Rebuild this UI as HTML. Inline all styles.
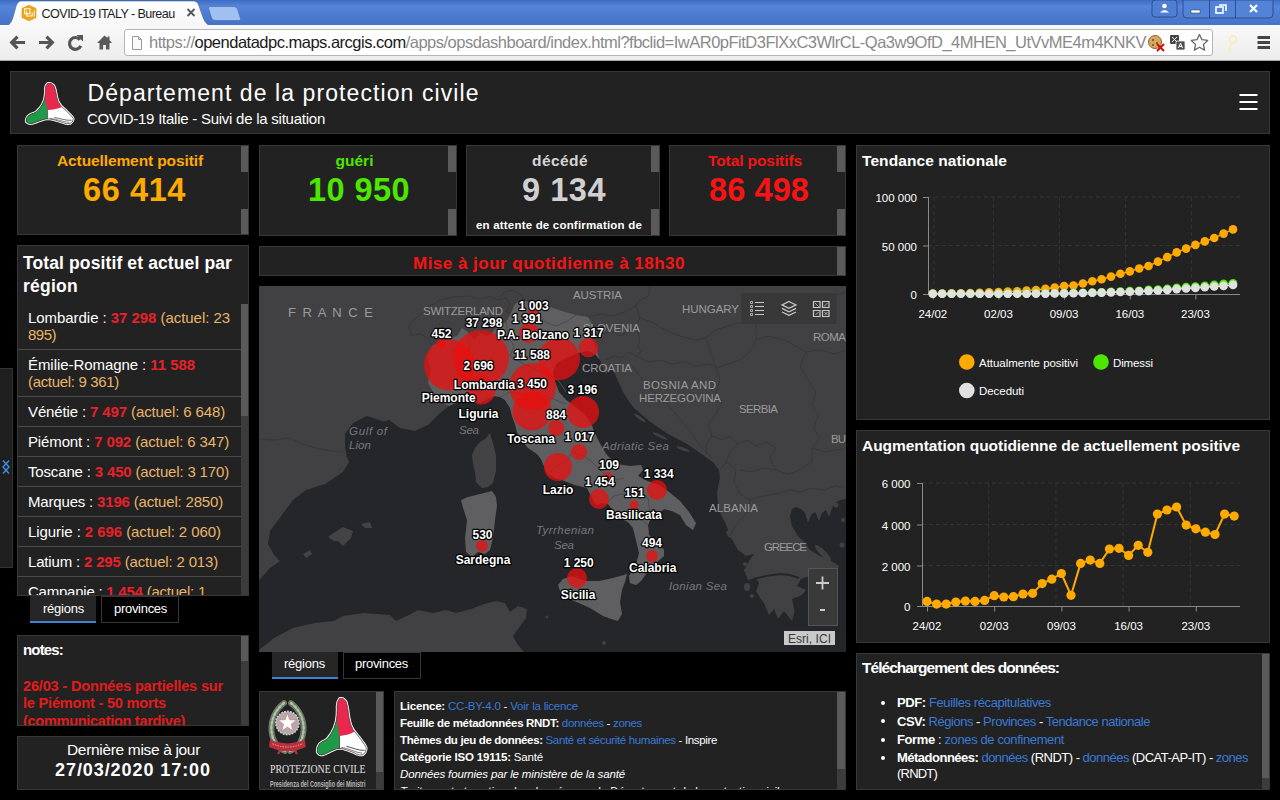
<!DOCTYPE html>
<html lang="fr">
<head>
<meta charset="utf-8">
<title>COVID-19 ITALY - Bureau</title>
<style>
*{box-sizing:border-box;margin:0;padding:0}
html,body{width:1280px;height:800px;overflow:hidden;background:#000}
body{position:relative;font-family:"Liberation Sans",sans-serif;color:#fff}
.abs{position:absolute}
.t{position:absolute;white-space:nowrap;line-height:1}
.panel{position:absolute;background:#222;border:1px solid #383838}
.sb{position:absolute;background:#5a5a5a}
.b{font-weight:bold}
a{color:#3b7ad6;text-decoration:none}
.li{height:30px;border-bottom:1px solid #4a4a4a;padding:6px 0 0 10px}
.ln{white-space:pre;display:block;width:max-content;height:17px}
.r{color:#e8212b}
.o{color:#e8b56a}
/*CHROME*/
#tabbar{left:0;top:0;width:1280px;height:25px;background:linear-gradient(#3d6cc4,#5584d8 25%,#4c7bd0 60%,#4573c8)}
#toolbar{left:0;top:25px;width:1280px;height:36px;background:linear-gradient(#f9f9f9,#ececec);border-bottom:1px solid #a8a8a8}
#urlbox{left:123.500px;top:29px;width:1089px;height:27px;background:#fff;border:1px solid #b5b5b5;border-radius:3px}
</style>
</head>
<body>
<div class="abs" id="tabbar"></div>
<svg class="abs" style="left:0;top:0" width="1280" height="26" viewBox="0 0 1280 26">
  <defs><linearGradient id="tg" x1="0" y1="0" x2="0" y2="1"><stop offset="0" stop-color="#ffffff"/><stop offset="1" stop-color="#f7f7f7"/></linearGradient></defs>
  <path d="M5 26 C11 25 12 21 15 10 C17 2.500 18 1 23 1 L192 1 C197 1 198 2.500 200 9 C204 20 205 25 212 26 Z" fill="url(#tg)" stroke="#4a5f8a" stroke-width="0.6"/>
  <path d="M209.500 6.500 L233 6.500 C236 6.500 237 7.500 238 10.500 L240.500 18.500 C240.500 19.500 240.500 20.500 238.500 20.500 L216 20.500 C213 20.500 212 19.500 211 16.500 L208.500 8.500 C208.500 7.500 208.500 6.500 209.500 6.500Z" fill="#9fc0f0" stroke="#4a6fb5" stroke-width="0.7"/>
  <!-- favicon -->
  <path d="M22 8.4 L29 5.2 L36 8.4 L36 17.6 L29 20.8 L22 17.6Z" fill="#eba516" stroke="#d9920f" stroke-width="0.6" stroke-linejoin="round"/>
  <path d="M24.6 8.8 h5.4 v4.8 h-5.4z M27 11.3 h-0.4 v4.7 h5.4" fill="none" stroke="#fff8e0" stroke-width="1.1"/><path d="M32.2 16.6 v-4 M34.3 16.6 v-6" stroke="#fff8e0" stroke-width="1.1"/>
  <!-- close x -->
  <path d="M187.5 9 l7 7 m0 -7 l-7 7" stroke="#555" stroke-width="1.8" fill="none"/>
  <!-- window controls -->
  <rect x="1152" y="0" width="25" height="17" rx="3" fill="#4f7fd2" stroke="#2d4f94" stroke-width="1"/>
  <circle cx="1164.5" cy="6" r="2.3" fill="#fff"/><path d="M1160 12.5 q4.5 -5 9 0z" fill="#fff"/>
  <path d="M1183 0 h90 v14 q0 4 -4 4 h-82 q-4 0 -4 -4z" fill="#5383d6" stroke="#2d4f94" stroke-width="1"/>
  <path d="M1209.5 0 v18 M1235.500 0 v18" stroke="#2d4f94" stroke-width="1"/>
  <rect x="1191" y="10" width="9" height="3" fill="#fff" stroke="#334" stroke-width="0.5"/>
  <rect x="1216" y="7" width="7" height="6" fill="none" stroke="#fff" stroke-width="1.6"/><path d="M1219 5 h7 v6" fill="none" stroke="#fff" stroke-width="1.6"/>
  <path d="M1250 5 l7 7 m0 -7 l-7 7" stroke="#fff" stroke-width="2.2" fill="none"/>
</svg>
<div class="t" style="left:41.6px;top:7.6px;font-size:12.6px;color:#1c1c1c;letter-spacing:-0.578px">COVID-19 ITALY - Bureau</div>
<div class="abs" id="toolbar"></div>
<div class="abs" id="urlbox"></div>
<svg class="abs" style="left:0;top:25px" width="1280" height="36" viewBox="0 25 1280 36">
  <g stroke="#555" stroke-width="3.2" fill="none" stroke-linecap="butt" stroke-linejoin="miter">
    <path d="M25 42.500 H12.500 M17.500 36.700 L11.700 42.500 L17.500 48.300"/>
    <path d="M39 42.500 H51.500 M46.500 36.700 L52.300 42.500 L46.500 48.300"/>
    <path d="M80 39.700 A5.900 5.900 0 1 0 80.800 45.800"/>
  </g>
  <path d="M76.500 35 L83 35 L83 41.500 Z" fill="#555"/>
  <path d="M104.500 35.500 L97 43 h2.500 v6.500 h3.600 v-4.500 h2.800 v4.500 h3.600 v-6.500 h2.500 L109.500 40 v-3.500 h-2 v1.500 Z" fill="#5a5a5a"/>
  <!-- page icon -->
  <path d="M132.500 36.500 h6 l3 3 v10 h-9z" fill="#fbfbfb" stroke="#9a9a9a" stroke-width="1"/>
  <path d="M138.500 36.500 v3 h3" fill="none" stroke="#9a9a9a" stroke-width="1"/>
  <!-- cookie -->
  <circle cx="1155" cy="42" r="6.500" fill="#d8a860" stroke="#8a6430" stroke-width="1"/>
  <circle cx="1153" cy="40" r="1" fill="#6a4420"/><circle cx="1157" cy="43" r="1" fill="#6a4420"/><circle cx="1153" cy="45" r="0.900" fill="#6a4420"/>
  <path d="M1157 44 l7 7 m0 -7 l-7 7" stroke="#cc1111" stroke-width="2"/>
  <!-- translate -->
  <rect x="1170" y="35" width="9" height="9" rx="1.2" fill="#444"/><rect x="1176" y="41" width="9" height="9" rx="1.2" fill="#505050" stroke="#f1f1f1" stroke-width="0.800"/>
  <path d="M1172 37 l5 5 m0 -5 l-5 5" stroke="#fff" stroke-width="1"/><path d="M1178.500 48 l2 -5 l2 5 m-3.300 -1.600 h2.600" stroke="#fff" stroke-width="1" fill="none"/>
  <!-- star -->
  <path d="M1199.5 34.5 l2.5 5.2 5.700 0.750 -4.200 3.950 1.100 5.700 -5.100 -2.800 -5.100 2.800 1.100 -5.700 -4.200 -3.950 5.700 -0.750z" fill="#fdfdfd" stroke="#666" stroke-width="1.3" stroke-linejoin="round"/>
  <!-- key -->
  <g stroke="#f6ecbc" fill="none" stroke-width="1.8"><circle cx="1233" cy="39.5" r="3.5"/><path d="M1231.5 43 l-2.500 8 m0.500 -3 l2.500 0.800"/></g>
  <!-- menu -->
  <path d="M1257.500 37.500 h12.500 M1257.500 42.500 h12.500 M1257.500 47.500 h12.500" stroke="#444" stroke-width="3"/>
</svg>
<div class="t" style="left:149px;top:34px;font-size:16.500px;color:#8a8a8a;letter-spacing:-0.502px">https://<span style="color:#1a1a1a">opendatadpc.maps.arcgis.com</span>/apps/opsdashboard/index.html?fbclid=IwAR0pFitD3FlXxC3WlrCL-Qa3w9OfD_4MHEN_UtVvME4m4KNKV</div>

<div class="panel" style="left:10px;top:71px;width:1260px;height:63px"></div>
<svg class="abs" style="left:25.500px;top:82.500px;overflow:visible" width="47" height="41" viewBox="0 0 100 100" preserveAspectRatio="none"><defs><clipPath id="lca"><path d="M49.3 0.7 C53.6 0.7 53.0 0.2 57.0 4.0 C61.0 7.8 59.0 5.2 61.3 12.2 C63.6 19.2 62.2 16.1 64.0 25.0 C65.8 33.9 64.4 30.6 66.7 38.9 C69.0 47.2 67.5 43.3 71.0 50.0 C74.5 56.7 72.3 52.9 77.3 58.9 C82.3 64.9 80.7 62.1 86.0 68.0 C91.3 73.9 89.0 71.4 93.3 76.7 C97.6 82.0 96.8 79.6 99.0 84.0 C101.2 88.4 101.0 85.8 100.0 90.0 C99.0 94.2 99.3 93.7 96.0 96.7 C92.7 99.7 94.3 98.6 90.0 99.0 C85.7 99.4 88.0 99.3 83.0 98.0 C78.0 96.7 80.4 96.9 75.0 95.0 C69.6 93.1 73.0 94.2 66.7 92.2 C60.4 90.2 63.1 90.5 56.0 89.0 C48.9 87.5 52.3 87.5 45.3 87.8 C38.3 88.1 42.1 87.8 35.0 90.0 C27.9 92.2 30.7 91.7 24.0 94.4 C17.3 97.1 20.3 96.5 15.0 98.0 C9.7 99.5 12.3 99.6 8.0 98.9 C3.7 98.2 4.5 98.6 2.0 96.0 C-0.5 93.4 0.3 95.2 0.5 91.0 C0.7 86.8 -0.1 88.0 2.7 83.3 C5.5 78.6 3.7 80.7 9.0 77.0 C14.3 73.3 13.0 76.2 18.7 72.2 C24.4 68.2 21.6 70.2 26.0 65.0 C30.4 59.8 28.3 63.0 32.0 56.7 C35.7 50.4 34.3 53.4 37.0 46.0 C39.7 38.6 38.7 42.4 40.0 34.4 C41.3 26.4 40.6 29.4 41.0 22.0 C41.4 14.6 40.3 18.2 41.3 12.2 C42.3 6.2 41.3 7.8 44.0 4.0 C46.7 0.2 45.0 0.7 49.3 0.7Z"/></clipPath></defs><path d="M49.3 0.7 C53.6 0.7 53.0 0.2 57.0 4.0 C61.0 7.8 59.0 5.2 61.3 12.2 C63.6 19.2 62.2 16.1 64.0 25.0 C65.8 33.9 64.4 30.6 66.7 38.9 C69.0 47.2 67.5 43.3 71.0 50.0 C74.5 56.7 72.3 52.9 77.3 58.9 C82.3 64.9 80.7 62.1 86.0 68.0 C91.3 73.9 89.0 71.4 93.3 76.7 C97.6 82.0 96.8 79.6 99.0 84.0 C101.2 88.4 101.0 85.8 100.0 90.0 C99.0 94.2 99.3 93.7 96.0 96.7 C92.7 99.7 94.3 98.6 90.0 99.0 C85.7 99.4 88.0 99.3 83.0 98.0 C78.0 96.7 80.4 96.9 75.0 95.0 C69.6 93.1 73.0 94.2 66.7 92.2 C60.4 90.2 63.1 90.5 56.0 89.0 C48.9 87.5 52.3 87.5 45.3 87.8 C38.3 88.1 42.1 87.8 35.0 90.0 C27.9 92.2 30.7 91.7 24.0 94.4 C17.3 97.1 20.3 96.5 15.0 98.0 C9.7 99.5 12.3 99.6 8.0 98.9 C3.7 98.2 4.5 98.6 2.0 96.0 C-0.5 93.4 0.3 95.2 0.5 91.0 C0.7 86.8 -0.1 88.0 2.7 83.3 C5.5 78.6 3.7 80.7 9.0 77.0 C14.3 73.3 13.0 76.2 18.7 72.2 C24.4 68.2 21.6 70.2 26.0 65.0 C30.4 59.8 28.3 63.0 32.0 56.7 C35.7 50.4 34.3 53.4 37.0 46.0 C39.7 38.6 38.7 42.4 40.0 34.4 C41.3 26.4 40.6 29.4 41.0 22.0 C41.4 14.6 40.3 18.2 41.3 12.2 C42.3 6.2 41.3 7.8 44.0 4.0 C46.7 0.2 45.0 0.7 49.3 0.7Z" fill="#fff" stroke="#fff" stroke-width="2.6" vector-effect="non-scaling-stroke" stroke-linejoin="round"/><g clip-path="url(#lca)"><rect x="-5" y="-5" width="110" height="110" fill="#e9284d"/><path d="M36 30 C42 42 43 55 46 66 L46 89 L20 112 L-12 112 L-12 55 Z" fill="#1f9a48"/><path d="M46 66 C56 66 66 64 78 58 L112 75 L112 112 L46 112 Z" fill="#fff"/><path d="M46 66 L46 89" stroke="#222" stroke-width="1.2"/><path d="M60 84 C72 86 84 92 97 91" stroke="#333" stroke-width="1.6" fill="none"/><path d="M50 86 C64 87 78 95 92 96" stroke="#333" stroke-width="1.2" fill="none"/></g><path d="M49.3 0.7 C53.6 0.7 53.0 0.2 57.0 4.0 C61.0 7.8 59.0 5.2 61.3 12.2 C63.6 19.2 62.2 16.1 64.0 25.0 C65.8 33.9 64.4 30.6 66.7 38.9 C69.0 47.2 67.5 43.3 71.0 50.0 C74.5 56.7 72.3 52.9 77.3 58.9 C82.3 64.9 80.7 62.1 86.0 68.0 C91.3 73.9 89.0 71.4 93.3 76.7 C97.6 82.0 96.8 79.6 99.0 84.0 C101.2 88.4 101.0 85.8 100.0 90.0 C99.0 94.2 99.3 93.7 96.0 96.7 C92.7 99.7 94.3 98.6 90.0 99.0 C85.7 99.4 88.0 99.3 83.0 98.0 C78.0 96.7 80.4 96.9 75.0 95.0 C69.6 93.1 73.0 94.2 66.7 92.2 C60.4 90.2 63.1 90.5 56.0 89.0 C48.9 87.5 52.3 87.5 45.3 87.8 C38.3 88.1 42.1 87.8 35.0 90.0 C27.9 92.2 30.7 91.7 24.0 94.4 C17.3 97.1 20.3 96.5 15.0 98.0 C9.7 99.5 12.3 99.6 8.0 98.9 C3.7 98.2 4.5 98.6 2.0 96.0 C-0.5 93.4 0.3 95.2 0.5 91.0 C0.7 86.8 -0.1 88.0 2.7 83.3 C5.5 78.6 3.7 80.7 9.0 77.0 C14.3 73.3 13.0 76.2 18.7 72.2 C24.4 68.2 21.6 70.2 26.0 65.0 C30.4 59.8 28.3 63.0 32.0 56.7 C35.7 50.4 34.3 53.4 37.0 46.0 C39.7 38.6 38.7 42.4 40.0 34.4 C41.3 26.4 40.6 29.4 41.0 22.0 C41.4 14.6 40.3 18.2 41.3 12.2 C42.3 6.2 41.3 7.8 44.0 4.0 C46.7 0.2 45.0 0.7 49.3 0.7Z" fill="none" stroke="#222" stroke-width="0.6" vector-effect="non-scaling-stroke"/></svg>
<div class="t" style="left:87.500px;font-size:23px;top:81.73px;letter-spacing:1.082px">Département de la protection civile</div>
<div class="t" style="left:87px;top:110.500px;font-size:15px;letter-spacing:-0.247px">COVID-19 Italie - Suivi de la situation</div>
<svg class="abs" style="left:1238px;top:92px" width="22" height="20"><path d="M1.500 3 h18 M1.500 10 h18 M1.500 17 h18" stroke="#fff" stroke-width="2"/></svg>

<!-- sidebar handle -->
<div class="abs" style="left:0;top:368px;width:13px;height:200px;background:#1f1f1f;border:1px solid #333;border-left:none"></div>
<svg class="abs" style="left:0px;top:459px" width="12" height="16"><path d="M3 1.500 l6 6.500 -6 6.500 M9 1.500 l-6 6.500 6 6.500" stroke="#3f8fe6" stroke-width="1.400" fill="none"/></svg>

<!-- L1 -->
<div class="panel" style="left:17px;top:145px;width:232px;height:90px"></div>
<div class="sb" style="left:241px;top:146px;width:7px;height:26px"></div>
<div class="sb" style="left:241px;top:209px;width:7px;height:25px"></div>
<div class="t b" style="left:57px;font-size:15.500px;top:152.88px;color:#ffaa00;letter-spacing:-0.107px">Actuellement positif</div>
<div class="t b" style="left:83px;font-size:32.500px;top:173.99px;color:#ffaa00;letter-spacing:0.599px">66 414</div>

<!-- L2 -->
<div class="panel" style="left:17px;top:245px;width:232px;height:351px;overflow:hidden">
  <div class="abs" style="left:0;top:57px;width:223px;height:300px;font-size:15px;line-height:17px;color:#fff">
    <div class="li" style="height:47px"><div class="ln" style="letter-spacing:-0.050px">Lombardie : <b class="r">37 298</b> <span class="o">(actuel: 23</span></div><div class="ln o" style="letter-spacing:-0.508px">895)</div></div>
    <div class="li" style="height:47px"><div class="ln" style="letter-spacing:-0.063px">Émilie-Romagne : <b class="r">11 588</b></div><div class="ln o" style="letter-spacing:-0.326px">(actuel: 9 361)</div></div>
    <div class="li"><div class="ln" style="letter-spacing:-0.129px">Vénétie : <b class="r">7 497</b> <span class="o">(actuel: 6 648)</span></div></div>
    <div class="li"><div class="ln" style="letter-spacing:-0.134px">Piémont : <b class="r">7 092</b> <span class="o">(actuel: 6 347)</span></div></div>
    <div class="li"><div class="ln" style="letter-spacing:-0.161px">Toscane : <b class="r">3 450</b> <span class="o">(actuel: 3 170)</span></div></div>
    <div class="li"><div class="ln" style="letter-spacing:-0.178px">Marques : <b class="r">3196</b> <span class="o">(actuel: 2850)</span></div></div>
    <div class="li"><div class="ln" style="letter-spacing:-0.070px">Ligurie : <b class="r">2 696</b> <span class="o">(actuel: 2 060)</span></div></div>
    <div class="li"><div class="ln" style="letter-spacing:-0.171px">Latium : <b class="r">2 295</b> <span class="o">(actuel: 2 013)</span></div></div>
    <div class="li"><div class="ln" style="letter-spacing:-0.233px">Campanie : <b class="r">1 454</b> <span class="o">(actuel: 1</span></div></div>
  </div>
  <div class="abs" style="left:223px;top:58px;width:8px;height:292px;background:#3c3c3c"></div>
  <div class="sb" style="left:223px;top:58px;width:8px;height:112px"></div>
</div>
<div class="t b" style="left:23px;font-size:17.500px;top:254.79px;letter-spacing:0.117px">Total positif et actuel par</div>
<div class="t b" style="left:23px;font-size:17.500px;top:277.79px;letter-spacing:0.253px">région</div>
<!-- tabs -->
<div class="abs" style="left:30px;top:596px;width:66px;height:27px;background:#262626;border-bottom:2px solid #3b82d8"></div>
<div class="abs" style="left:101px;top:596px;width:78px;height:27px;background:#020202;border:1px solid #363636"></div>
<div class="t" style="left:43px;font-size:13px;top:601.60px;letter-spacing:-0.234px">régions</div>
<div class="t" style="left:114px;font-size:13px;top:601.60px;letter-spacing:-0.293px">provinces</div>

<!-- L3 notes -->
<div class="panel" style="left:17px;top:635px;width:232px;height:91px;overflow:hidden">
  <div class="abs" style="left:223px;top:0;width:8px;height:92px;background:#3c3c3c"></div>
  <div class="sb" style="left:223px;top:0;width:8px;height:25px"></div>
</div>
<div class="t b" style="left:23px;font-size:15px;top:642.30px;letter-spacing:-0.833px">notes:</div>
<div class="abs" style="left:17px;top:675px;width:224px;height:50px;overflow:hidden">
<div class="t b" style="left:6px;top:3.500px;font-size:14.500px;color:#e21c1c;letter-spacing:-0.157px">26/03 - Données partielles sur</div>
<div class="t b" style="left:6px;top:21px;font-size:14.500px;color:#e21c1c;letter-spacing:-0.174px">le Piémont - 50 morts</div>
<div class="t b" style="left:6px;top:39.300px;font-size:14.500px;color:#e21c1c;letter-spacing:-0.278px">(communication tardive)</div>
</div>

<!-- L4 -->
<div class="panel" style="left:17px;top:736px;width:232px;height:54px"></div>
<div class="t" style="left:67px;font-size:15.500px;top:741.88px;letter-spacing:-0.328px">Dernière mise à jour</div>
<div class="t b" style="left:55px;font-size:18px;top:760.76px;letter-spacing:0.929px">27/03/2020 17:00</div>

<!-- M1 -->
<div class="panel" style="left:259px;top:145px;width:198px;height:91px"></div>
<div class="sb" style="left:448px;top:146px;width:8px;height:26px"></div>
<div class="sb" style="left:448px;top:209px;width:8px;height:26px"></div>
<div class="t b" style="left:335.500px;font-size:15.500px;top:152.88px;color:#4ce600;letter-spacing:0.019px">guéri</div>
<div class="t b" style="left:308px;font-size:32.500px;top:173.99px;color:#4ce600;letter-spacing:0.432px">10 950</div>
<!-- M2 -->
<div class="panel" style="left:466px;top:145px;width:194px;height:91px"></div>
<div class="sb" style="left:651px;top:146px;width:8px;height:26px"></div>
<div class="sb" style="left:651px;top:209px;width:8px;height:26px"></div>
<div class="t b" style="left:532px;font-size:15.500px;top:152.88px;color:#d6d6d6;letter-spacing:0.430px">décédé</div>
<div class="t b" style="left:522px;font-size:32.500px;top:173.99px;color:#d0d0d0;letter-spacing:0.531px">9 134</div>
<div class="t b" style="left:476px;font-size:11.500px;top:220.27px;color:#fff;letter-spacing:0.193px">en attente de confirmation de</div>
<!-- M3 -->
<div class="panel" style="left:669px;top:145px;width:177px;height:91px"></div>
<div class="sb" style="left:837px;top:146px;width:8px;height:26px"></div>
<div class="sb" style="left:837px;top:209px;width:8px;height:26px"></div>
<div class="t b" style="left:708px;font-size:15.500px;top:152.88px;color:#f81414;letter-spacing:-0.093px">Total positifs</div>
<div class="t b" style="left:709px;font-size:32.500px;top:173.99px;color:#f81414;letter-spacing:0.099px">86 498</div>
<!-- banner -->
<div class="panel" style="left:259px;top:246px;width:587px;height:30px"></div>
<div class="sb" style="left:837px;top:247px;width:8px;height:28px"></div>
<div class="t b" style="left:413px;font-size:17px;top:255.11px;color:#f81414;letter-spacing:0.485px">Mise à jour quotidienne à 18h30</div>
<!-- map tabs -->
<div class="abs" style="left:272px;top:652px;width:66px;height:27px;background:#262626;border-bottom:2px solid #3b82d8"></div>
<div class="abs" style="left:343px;top:652px;width:78px;height:27px;background:#020202;border:1px solid #363636"></div>
<div class="t" style="left:284px;font-size:13px;top:657.00px;letter-spacing:-0.234px">régions</div>
<div class="t" style="left:355px;font-size:13px;top:657.00px;letter-spacing:-0.293px">provinces</div>
<!-- logo panel -->
<div class="panel" style="left:259px;top:691px;width:125px;height:99px;overflow:hidden">
  <div class="abs" style="left:116px;top:0;width:8px;height:99px;background:#3c3c3c"></div>
  <div class="sb" style="left:116px;top:0;width:8px;height:80px"></div>
</div>
<svg class="abs" style="left:262px;top:693px" width="112" height="96" viewBox="262 693 112 96">
  <!-- emblem -->
  <g fill="none" stroke-linecap="round">
  <path d="M285 751 C268 744 266 717 284 703" stroke="#6b7a63" stroke-width="5.8"/>
  <path d="M290 751 C307 744 309 717 291 703" stroke="#6b7a63" stroke-width="5.8"/>
  <path d="M285 751 C268 744 266 717 284 703" stroke="#b4bfac" stroke-width="2.4" stroke-dasharray="2.2 2.4"/>
  <path d="M290 751 C307 744 309 717 291 703" stroke="#b4bfac" stroke-width="2.4" stroke-dasharray="2.2 2.4"/>
  </g>
  <circle cx="287.4" cy="723" r="11.6" fill="#b3aaac" stroke="#d2caca" stroke-width="1.6" stroke-dasharray="1.8 1.2"/>
  <path d="M287.4 713.2 l2.3 6.600 7 0.200 -5.500 4.300 2 6.700 -5.800 -3.900 -5.800 3.900 2 -6.700 -5.500 -4.300 7 -0.200z" fill="#ffffff" stroke="#d06a6a" stroke-width="0.6"/>
  <path d="M270 739.6 q17.400 7.600 34.800 0 l1 7.400 q-18.400 8.400 -36.800 0z" fill="#b7303c"/>
  <path d="M272.400 743.800 q15 6.400 30 0" stroke="#e08a90" stroke-width="1.1" fill="none" stroke-dasharray="1.6 1"/>
  <path d="M281 749 l-3 5 M294 749 l3 5" stroke="#b7303c" stroke-width="2.2"/>
  <text x="270" y="772.800" font-family="Liberation Serif, serif" font-size="12" fill="#e2e2e2" textLength="95.500" lengthAdjust="spacingAndGlyphs">PROTEZIONE CIVILE</text>
  <text x="270" y="787" font-family="Liberation Sans, sans-serif" font-weight="bold" font-size="9" fill="#b8b8b8" textLength="95.500" lengthAdjust="spacingAndGlyphs">Presidenza del Consiglio dei Ministri</text>
</svg>
<svg class="abs" style="left:317px;top:698px;overflow:visible" width="49" height="57.500" viewBox="0 0 100 100" preserveAspectRatio="none"><defs><clipPath id="lcb"><path d="M49.3 0.7 C53.6 0.7 53.0 0.2 57.0 4.0 C61.0 7.8 59.0 5.2 61.3 12.2 C63.6 19.2 62.2 16.1 64.0 25.0 C65.8 33.9 64.4 30.6 66.7 38.9 C69.0 47.2 67.5 43.3 71.0 50.0 C74.5 56.7 72.3 52.9 77.3 58.9 C82.3 64.9 80.7 62.1 86.0 68.0 C91.3 73.9 89.0 71.4 93.3 76.7 C97.6 82.0 96.8 79.6 99.0 84.0 C101.2 88.4 101.0 85.8 100.0 90.0 C99.0 94.2 99.3 93.7 96.0 96.7 C92.7 99.7 94.3 98.6 90.0 99.0 C85.7 99.4 88.0 99.3 83.0 98.0 C78.0 96.7 80.4 96.9 75.0 95.0 C69.6 93.1 73.0 94.2 66.7 92.2 C60.4 90.2 63.1 90.5 56.0 89.0 C48.9 87.5 52.3 87.5 45.3 87.8 C38.3 88.1 42.1 87.8 35.0 90.0 C27.9 92.2 30.7 91.7 24.0 94.4 C17.3 97.1 20.3 96.5 15.0 98.0 C9.7 99.5 12.3 99.6 8.0 98.9 C3.7 98.2 4.5 98.6 2.0 96.0 C-0.5 93.4 0.3 95.2 0.5 91.0 C0.7 86.8 -0.1 88.0 2.7 83.3 C5.5 78.6 3.7 80.7 9.0 77.0 C14.3 73.3 13.0 76.2 18.7 72.2 C24.4 68.2 21.6 70.2 26.0 65.0 C30.4 59.8 28.3 63.0 32.0 56.7 C35.7 50.4 34.3 53.4 37.0 46.0 C39.7 38.6 38.7 42.4 40.0 34.4 C41.3 26.4 40.6 29.4 41.0 22.0 C41.4 14.6 40.3 18.2 41.3 12.2 C42.3 6.2 41.3 7.8 44.0 4.0 C46.7 0.2 45.0 0.7 49.3 0.7Z"/></clipPath></defs><path d="M49.3 0.7 C53.6 0.7 53.0 0.2 57.0 4.0 C61.0 7.8 59.0 5.2 61.3 12.2 C63.6 19.2 62.2 16.1 64.0 25.0 C65.8 33.9 64.4 30.6 66.7 38.9 C69.0 47.2 67.5 43.3 71.0 50.0 C74.5 56.7 72.3 52.9 77.3 58.9 C82.3 64.9 80.7 62.1 86.0 68.0 C91.3 73.9 89.0 71.4 93.3 76.7 C97.6 82.0 96.8 79.6 99.0 84.0 C101.2 88.4 101.0 85.8 100.0 90.0 C99.0 94.2 99.3 93.7 96.0 96.7 C92.7 99.7 94.3 98.6 90.0 99.0 C85.7 99.4 88.0 99.3 83.0 98.0 C78.0 96.7 80.4 96.9 75.0 95.0 C69.6 93.1 73.0 94.2 66.7 92.2 C60.4 90.2 63.1 90.5 56.0 89.0 C48.9 87.5 52.3 87.5 45.3 87.8 C38.3 88.1 42.1 87.8 35.0 90.0 C27.9 92.2 30.7 91.7 24.0 94.4 C17.3 97.1 20.3 96.5 15.0 98.0 C9.7 99.5 12.3 99.6 8.0 98.9 C3.7 98.2 4.5 98.6 2.0 96.0 C-0.5 93.4 0.3 95.2 0.5 91.0 C0.7 86.8 -0.1 88.0 2.7 83.3 C5.5 78.6 3.7 80.7 9.0 77.0 C14.3 73.3 13.0 76.2 18.7 72.2 C24.4 68.2 21.6 70.2 26.0 65.0 C30.4 59.8 28.3 63.0 32.0 56.7 C35.7 50.4 34.3 53.4 37.0 46.0 C39.7 38.6 38.7 42.4 40.0 34.4 C41.3 26.4 40.6 29.4 41.0 22.0 C41.4 14.6 40.3 18.2 41.3 12.2 C42.3 6.2 41.3 7.8 44.0 4.0 C46.7 0.2 45.0 0.7 49.3 0.7Z" fill="#fff" stroke="#fff" stroke-width="2.6" vector-effect="non-scaling-stroke" stroke-linejoin="round"/><g clip-path="url(#lcb)"><rect x="-5" y="-5" width="110" height="110" fill="#e9284d"/><path d="M36 30 C42 42 43 55 46 66 L46 89 L20 112 L-12 112 L-12 55 Z" fill="#1f9a48"/><path d="M46 66 C56 66 66 64 78 58 L112 75 L112 112 L46 112 Z" fill="#fff"/><path d="M46 66 L46 89" stroke="#222" stroke-width="1.2"/><path d="M60 84 C72 86 84 92 97 91" stroke="#333" stroke-width="1.6" fill="none"/><path d="M50 86 C64 87 78 95 92 96" stroke="#333" stroke-width="1.2" fill="none"/></g><path d="M49.3 0.7 C53.6 0.7 53.0 0.2 57.0 4.0 C61.0 7.8 59.0 5.2 61.3 12.2 C63.6 19.2 62.2 16.1 64.0 25.0 C65.8 33.9 64.4 30.6 66.7 38.9 C69.0 47.2 67.5 43.3 71.0 50.0 C74.5 56.7 72.3 52.9 77.3 58.9 C82.3 64.9 80.7 62.1 86.0 68.0 C91.3 73.9 89.0 71.4 93.3 76.7 C97.6 82.0 96.8 79.6 99.0 84.0 C101.2 88.4 101.0 85.8 100.0 90.0 C99.0 94.2 99.3 93.7 96.0 96.7 C92.7 99.7 94.3 98.6 90.0 99.0 C85.7 99.4 88.0 99.3 83.0 98.0 C78.0 96.7 80.4 96.9 75.0 95.0 C69.6 93.1 73.0 94.2 66.7 92.2 C60.4 90.2 63.1 90.5 56.0 89.0 C48.9 87.5 52.3 87.5 45.3 87.8 C38.3 88.1 42.1 87.8 35.0 90.0 C27.9 92.2 30.7 91.7 24.0 94.4 C17.3 97.1 20.3 96.5 15.0 98.0 C9.7 99.5 12.3 99.6 8.0 98.9 C3.7 98.2 4.5 98.6 2.0 96.0 C-0.5 93.4 0.3 95.2 0.5 91.0 C0.7 86.8 -0.1 88.0 2.7 83.3 C5.5 78.6 3.7 80.7 9.0 77.0 C14.3 73.3 13.0 76.2 18.7 72.2 C24.4 68.2 21.6 70.2 26.0 65.0 C30.4 59.8 28.3 63.0 32.0 56.7 C35.7 50.4 34.3 53.4 37.0 46.0 C39.7 38.6 38.7 42.4 40.0 34.4 C41.3 26.4 40.6 29.4 41.0 22.0 C41.4 14.6 40.3 18.2 41.3 12.2 C42.3 6.2 41.3 7.8 44.0 4.0 C46.7 0.2 45.0 0.7 49.3 0.7Z" fill="none" stroke="#222" stroke-width="0.6" vector-effect="non-scaling-stroke"/></svg>
<!-- licence panel -->
<div class="panel" style="left:394px;top:691px;width:452px;height:99px;overflow:hidden">
  <div class="abs" style="left:442px;top:0;width:8px;height:99px;background:#3c3c3c"></div>
  <div class="sb" style="left:442px;top:0;width:8px;height:77px"></div>
</div>
<div class="abs" style="left:394px;top:692px;width:442px;height:97px;overflow:hidden;font-size:11.500px">
<div class="t" style="left:6px;font-size:11.500px;top:9.47px;letter-spacing:-0.212px"><b>Licence:</b> <a>CC-BY-4.0</a> - <a>Voir la licence</a></div>
<div class="t" style="left:6px;font-size:11.500px;top:26.07px;letter-spacing:-0.325px"><b>Feuille de métadonnées RNDT:</b> <a>données</a> - <a>zones</a></div>
<div class="t" style="left:6px;font-size:11.500px;top:42.77px;letter-spacing:-0.351px"><b>Thèmes du jeu de données:</b> <a>Santé et sécurité humaines</a> - Inspire</div>
<div class="t" style="left:6px;font-size:11.500px;top:59.77px;letter-spacing:-0.180px"><b>Catégorie ISO 19115:</b> Santé</div>
<div class="t" style="left:6px;font-size:11.500px;font-style:italic;top:76.77px;letter-spacing:-0.143px">Données fournies par le ministère de la santé</div>
<div class="t" style="left:6px;font-size:11.500px;font-style:italic;top:94.27px;letter-spacing:-0.045px">Traitement et gestion des données par le Département de la protection civile</div>
</div>

<svg class="abs" style="left:259px;top:286px" width="587" height="366" viewBox="259 286 587 366" font-family="Liberation Sans, sans-serif">
<rect x="259" y="286" width="587" height="366" fill="#25262a"/>
<path d="M259 286 L259 581 L261 578 L270 568 L280 561 L274 555 L268 544 L270 531 L282 515 L293 500 L306 490 L325 484 L343 472 L349 462 L346.5 456 L345 445 L345 434 L353 423 L367 416 L376 419 L384 421.5 L389 420 L400 428 L415 431 L428 425 L439 414 L449 406 L458 402 L466 400 L474 401 L480 403 L488 399 L494 396 L500 397 L505 400 L510 408 L512 416 L515 424 L517 432 L522 441 L528 448 L537 454 L541 459 L543 464 L548 474 L555 478 L562 480 L575 485 L587 488 L590 494 L593 500 L596 505 L602 503 L608 504 L612 509 L620 518 L628 522 L633 528 L636 540 L639 553 L636 565 L629 576 L630 583 L636 585 L641 581 L646 574 L655 564 L664 556 L664 550 L658 543 L649 535 L648 525 L651 518 L658 514 L664 509 L672 511 L680 515 L686 525 L693 530 L696 523 L689 512 L680 501 L669 492 L659 485 L647 481 L638 476 L643 470 L641 465 L630 466 L616 464 L606 454 L598 440 L592 426 L586 416 L576 407 L566 400 L559 392 L555 382 L553 372 L556 364 L566 358 L578 353 L588 351 L595 354 L599 359 L601 362 L603 369 L606 374 L609 369 L611 365 L614 372 L618 381 L623 392 L628 400 L634 408 L649 421 L668 434 L687 444 L703 455 L714 463 L719 470 L720 478 L717 492 L718 507 L722 517 L726 524 L730 536 L738 550 L746 556 L754 554 L749 561 L744 570 L748 580 L756 578 L759 583 L756 591 L760 598 L764 603 L769 615 L774 609 L778 619 L784 611 L792 621 L794.5 611 L792 599 L802 595 L806 590 L797 586 L801 579 L812 575 L822 578 L830 588 L838 590 L838 568 L839 566 L833 562 L820 556 L810 550 L806 544 L798 536 L792 526 L790 516 L792 509 L796 507 L801 509 L805 513 L808 523 L811 515 L815 512 L819 521 L822 513 L826 510 L829 517 L832 508 L835 503 L840 500 L846 499 L846 286Z" fill="#414143"/>
<path d="M259 653 L259 650 L274 638 L293 628 L315 623 L334 621 L343 616 L364 613 L390 615 L396 621 L409 615 L418 610 L433 613 L446 610 L456 613 L471 609 L484 604 L496 601 L505 603 L510 612 L518 606 L527 609 L526 618 L518 629 L513 636 L518 645 L525 653Z" fill="#414143"/>
<path d="M490 433 L486 438 L479 443 L475 448 L472 455 L473 464 L475 472 L476 482 L482 488 L488 487 L493 483 L496 471 L496 455 L493 443 L491 437Z" fill="#434345"/>
<path d="M328 537 L335 532 L343 527 L353 531 L351 538 L343 546 L338 541 L334 541Z" fill="#434345"/>
<path d="M361 524 L370 522 L372 528 L365 528Z" fill="#434345"/>
<path d="M303 554 L310 550 L312 554 L306 558Z" fill="#434345"/>
<g fill="#414143"><ellipse cx="729" cy="534" rx="2" ry="4" transform="rotate(-30 729 534)"/><circle cx="745" cy="564" r="2"/><ellipse cx="747" cy="587" rx="3" ry="4"/><circle cx="752" cy="596" r="2"/><circle cx="547" cy="617" r="1.500"/><circle cx="604" cy="643" r="2"/><circle cx="836" cy="505" r="2.500"/><ellipse cx="622" cy="385" rx="1.500" ry="5" transform="rotate(-30 622 385)"/><ellipse cx="640" cy="418" rx="1.500" ry="7" transform="rotate(-55 640 418)"/><ellipse cx="660" cy="436" rx="1.500" ry="8" transform="rotate(-65 660 436)"/><ellipse cx="683" cy="449" rx="1.500" ry="7" transform="rotate(-70 683 449)"/><ellipse cx="823" cy="553" rx="3" ry="11" transform="rotate(-45 823 553)"/><circle cx="842" cy="545" r="2.500"/><circle cx="843" cy="520" r="2"/></g>
<path d="M753 579 L766 576 L780 574 L790 575 L799 578" stroke="#25262a" stroke-width="2" fill="none"/>
<path d="M449 406 L458 402 L466 400 L474 401 L480 403 L488 399 L494 396 L500 397 L505 400 L510 408 L512 416 L515 424 L517 432 L522 441 L528 448 L537 454 L541 459 L543 464 L548 474 L555 478 L562 480 L575 485 L587 488 L590 494 L593 500 L596 505 L602 503 L608 504 L612 509 L620 518 L628 522 L633 528 L636 540 L639 553 L636 565 L629 576 L630 583 L636 585 L641 581 L646 574 L655 564 L664 556 L664 550 L658 543 L649 535 L648 525 L651 518 L658 514 L664 509 L672 511 L680 515 L686 525 L693 530 L696 523 L689 512 L680 501 L669 492 L659 485 L647 481 L638 476 L643 470 L641 465 L630 466 L616 464 L606 454 L598 440 L592 426 L586 416 L576 407 L566 400 L559 392 L555 382 L553 372 L556 364 L566 358 L578 353 L588 351 L595 354 L599 359 L597 350 L592 340 L588 332 L592 324 L588 317 L576 315 L562 311 L550 307 L541 300 L531 302 L522 300 L515 304 L511 313 L506 322 L500 325 L494 330 L488 337 L481 333 L474 340 L468 332 L462 328 L457 336 L450 338 L441 342 L432 346 L427 357 L431 369 L428 383 L434 394 L441 402Z" fill="#5f5f61"/>
<path d="M461 500 L468 497 L480 494 L492 491 L496 497 L497 506 L495 520 L493 538 L490 550 L485 554 L478 552 L472 557 L466 552 L465 538 L467 520 L463 508Z" fill="#5f5f61"/>
<path d="M558 585 L563 579 L572 576 L580 579 L586 581 L599 581 L613 578 L627 574 L625 582 L622 590 L620 602 L622 614 L618 621 L611 619 L603 616 L590 608 L574 601 L561 594Z" fill="#5f5f61"/>
<path d="M259 439 L275 440 L290 438 L300 443 L312 447 L330 451 L345 452" stroke="#38383a" stroke-width="1" fill="none"/>
<path d="M432 346 L428 338 L420 334 L412 336 L408 326 L416 318 L424 312 L432 305 L440 300 L452 297 L468 296 L480 299 L490 296 L498 300 L506 298 L510 304 L506 312 L511 313" stroke="#38383a" stroke-width="1" fill="none"/>
<path d="M498 300 L504 292 L512 290 L520 294 L524 300" stroke="#38383a" stroke-width="1" fill="none"/>
<path d="M588 317 L600 314 L612 316 L625 312 L636 306 L640 300 L648 296 L650 286" stroke="#38383a" stroke-width="1" fill="none"/>
<path d="M588 332 L596 330 L604 334 L612 331 L620 336 L628 332 L636 325 L640 318 L636 306" stroke="#38383a" stroke-width="1" fill="none"/>
<path d="M640 318 L652 322 L665 330 L680 336 L696 340 L706 338 L715 330 L728 326 L742 322 L756 318 L770 312 L785 310 L800 312 L812 306 L822 300 L834 296 L846 292" stroke="#38383a" stroke-width="1" fill="none"/>
<path d="M606 360 L614 356 L622 358 L628 352 L636 356 L641 352 L638 346 L640 340 L636 325" stroke="#38383a" stroke-width="1" fill="none"/>
<path d="M636 356 L648 362 L660 360 L672 364 L684 362 L696 366 L708 364 L716 368 L712 356 L706 338" stroke="#38383a" stroke-width="1" fill="none"/>
<path d="M632 366 L640 376 L650 388 L662 400 L674 412 L684 424 L694 436 L700 446 L706 452" stroke="#38383a" stroke-width="1" fill="none"/>
<path d="M716 368 L720 380 L716 392 L722 402 L716 414 L708 424 L712 436 L706 446 L706 452 L712 458" stroke="#38383a" stroke-width="1" fill="none"/>
<path d="M716 368 L728 364 L740 360 L750 352 L756 340 L770 336 L784 340 L796 346 L806 352" stroke="#38383a" stroke-width="1" fill="none"/>
<path d="M756 340 L756 318" stroke="#38383a" stroke-width="1" fill="none"/>
<path d="M806 352 L800 366 L808 380 L816 392 L812 404 L818 416 L814 428 L820 438 L812 448" stroke="#38383a" stroke-width="1" fill="none"/>
<path d="M712 436 L722 440 L730 436 L738 444 L730 452 L726 462 L720 470" stroke="#38383a" stroke-width="1" fill="none"/>
<path d="M738 444 L748 440 L756 446 L766 442 L776 448 L770 458 L776 470 L788 474 L800 470 L812 462 L812 448 L826 452 L846 448" stroke="#38383a" stroke-width="1" fill="none"/>
<path d="M726 462 L736 470 L734 482 L740 494 L750 500 L748 512 L740 520 L734 528 L730 536" stroke="#38383a" stroke-width="1" fill="none"/>
<path d="M750 500 L762 496 L776 494 L790 490 L800 492 L812 488 L824 490 L836 486 L846 488" stroke="#38383a" stroke-width="1" fill="none"/>
<path d="M740 470 L752 472 L764 468 L776 470" stroke="#38383a" stroke-width="1" fill="none"/>
<path d="M806 352 L820 350 L834 354 L846 350" stroke="#38383a" stroke-width="1" fill="none"/>
<path d="M524 300 L531 302" stroke="#38383a" stroke-width="1" fill="none"/>
<path d="M468 332 L470 345 L466 356 L472 368 L468 380 L476 388" stroke="#4c4c4e" stroke-width="1" fill="none"/>
<path d="M506 322 L508 336 L514 346 L510 356" stroke="#4c4c4e" stroke-width="1" fill="none"/>
<path d="M541 300 L538 312 L545 322 L556 326 L566 322 L576 315" stroke="#4c4c4e" stroke-width="1" fill="none"/>
<path d="M510 356 L520 362 L532 368 L546 374 L558 380 L567 393" stroke="#4c4c4e" stroke-width="1" fill="none"/>
<path d="M500 397 L510 392 L522 394 L534 398 L546 396 L556 400 L566 404" stroke="#4c4c4e" stroke-width="1" fill="none"/>
<path d="M548 474 L556 466 L566 462 L572 452 L584 456 L592 462 L600 470 L606 476 L616 480 L624 478" stroke="#4c4c4e" stroke-width="1" fill="none"/>
<path d="M606 504 L614 496 L622 494 L630 498 L640 494 L648 498 L651 518" stroke="#4c4c4e" stroke-width="1" fill="none"/>
<path d="M620 518 L630 514 L640 518 L648 525" stroke="#4c4c4e" stroke-width="1" fill="none"/>
<text x="288" y="317" font-size="13" fill="#9b9b9b" textLength="85" lengthAdjust="spacing">F R A N C E</text>
<text x="423" y="315" font-size="11.5" fill="#9b9b9b" textLength="80" lengthAdjust="spacing">SWITZERLAND</text>
<text x="573" y="299" font-size="11.5" fill="#9b9b9b" textLength="49" lengthAdjust="spacing">AUSTRIA</text>
<text x="682" y="313" font-size="11.5" fill="#9b9b9b" textLength="57" lengthAdjust="spacing">HUNGARY</text>
<text x="583" y="332" font-size="11.5" fill="#9b9b9b" textLength="57" lengthAdjust="spacing">SLOVENIA</text>
<text x="582" y="372" font-size="11.5" fill="#9b9b9b" textLength="50" lengthAdjust="spacing">CROATIA</text>
<text x="643" y="389" font-size="11.5" fill="#9b9b9b" textLength="73" lengthAdjust="spacing">BOSNIA AND</text>
<text x="639" y="402" font-size="11.5" fill="#9b9b9b" textLength="82" lengthAdjust="spacing">HERZEGOVINA</text>
<text x="739" y="413" font-size="11.5" fill="#9b9b9b" textLength="39" lengthAdjust="spacing">SERBIA</text>
<text x="813" y="341" font-size="11.5" fill="#9b9b9b" textLength="33" lengthAdjust="spacing">ROMA</text>
<text x="831" y="443" font-size="11.5" fill="#9b9b9b" textLength="15" lengthAdjust="spacing">BU</text>
<text x="709" y="512" font-size="11.5" fill="#9b9b9b" textLength="49" lengthAdjust="spacing">ALBANIA</text>
<text x="764" y="551" font-size="11.5" fill="#9b9b9b" textLength="43" lengthAdjust="spacing">GREECE</text>
<text x="349" y="435" font-size="11.5" fill="#77787c" textLength="38" lengthAdjust="spacing" font-style="italic">Gulf of</text>
<text x="349" y="449" font-size="11.5" fill="#77787c" textLength="22" lengthAdjust="spacing" font-style="italic">Lion</text>
<text x="459" y="433.5" font-size="11.5" fill="#77787c" textLength="20" lengthAdjust="spacing" font-style="italic">Sea</text>
<text x="602" y="450" font-size="11.5" fill="#77787c" textLength="67" lengthAdjust="spacing" font-style="italic">Adriatic Sea</text>
<text x="536" y="534" font-size="11.5" fill="#77787c" textLength="58" lengthAdjust="spacing" font-style="italic">Tyrrhenian</text>
<text x="554" y="549" font-size="11.5" fill="#77787c" textLength="20" lengthAdjust="spacing" font-style="italic">Sea</text>
<text x="669" y="590" font-size="11.5" fill="#77787c" textLength="58" lengthAdjust="spacing" font-style="italic">Ionian Sea</text>
<circle cx="449.5" cy="365" r="25.5" fill="#e81010" fill-opacity="0.76"/>
<circle cx="481" cy="358" r="28" fill="#e81010" fill-opacity="0.76"/>
<circle cx="481" cy="390" r="14.5" fill="#e81010" fill-opacity="0.76"/>
<circle cx="529" cy="333" r="10" fill="#e81010" fill-opacity="0.76"/>
<circle cx="533" cy="314" r="6" fill="#e81010" fill-opacity="0.76"/>
<circle cx="441.5" cy="344" r="5" fill="#e81010" fill-opacity="0.76"/>
<circle cx="559" cy="359" r="21" fill="#e81010" fill-opacity="0.76"/>
<circle cx="588.5" cy="347.6" r="9.7" fill="#e81010" fill-opacity="0.76"/>
<circle cx="532.5" cy="386.5" r="23.5" fill="#e81010" fill-opacity="0.76"/>
<circle cx="532" cy="411" r="19.5" fill="#e81010" fill-opacity="0.76"/>
<circle cx="583" cy="412" r="16" fill="#e81010" fill-opacity="0.76"/>
<circle cx="556" cy="428" r="8" fill="#e81010" fill-opacity="0.76"/>
<circle cx="579" cy="452" r="8" fill="#e81010" fill-opacity="0.76"/>
<circle cx="558" cy="467" r="14" fill="#e81010" fill-opacity="0.76"/>
<circle cx="608" cy="476" r="4" fill="#e81010" fill-opacity="0.76"/>
<circle cx="599" cy="499" r="10" fill="#e81010" fill-opacity="0.76"/>
<circle cx="634" cy="505" r="4.5" fill="#e81010" fill-opacity="0.76"/>
<circle cx="657" cy="490" r="10" fill="#e81010" fill-opacity="0.76"/>
<circle cx="652" cy="556" r="6" fill="#e81010" fill-opacity="0.76"/>
<circle cx="577" cy="578" r="10" fill="#e81010" fill-opacity="0.76"/>
<circle cx="482" cy="546" r="6" fill="#e81010" fill-opacity="0.76"/>
<g font-weight="bold" font-size="12" fill="#fff" stroke="#000" stroke-width="2.400" stroke-linejoin="round" paint-order="stroke" text-anchor="middle">
<text x="533.7" y="309.9">1 003</text>
<text x="527" y="322.9">1 391</text>
<text x="484" y="326.9">37 298</text>
<text x="441.5" y="337.9">452</text>
<text x="533" y="339.4">P.A. Bolzano</text>
<text x="588.6" y="336.9">1 317</text>
<text x="532" y="358.6">11 588</text>
<text x="478.5" y="370.4">2 696</text>
<text x="484.5" y="388.6">Lombardia</text>
<text x="532" y="387.9">3 450</text>
<text x="448.7" y="401.6">Piemonte</text>
<text x="582.5" y="393.6">3 196</text>
<text x="478.5" y="417.9">Liguria</text>
<text x="556" y="419.4">884</text>
<text x="531" y="442.9">Toscana</text>
<text x="579.4" y="440.9">1 017</text>
<text x="609" y="469.4">109</text>
<text x="658.7" y="477.9">1 334</text>
<text x="558" y="494.4">Lazio</text>
<text x="599.7" y="485.9">1 454</text>
<text x="634.4" y="497.4">151</text>
<text x="634" y="519.4">Basilicata</text>
<text x="482.5" y="538.6">530</text>
<text x="483" y="563.6">Sardegna</text>
<text x="652" y="547.4">494</text>
<text x="578.7" y="567.4">1 250</text>
<text x="652.7" y="572.4">Calabria</text>
<text x="578" y="598.6">Sicilia</text>
</g>
<rect x="741.500" y="293" width="95" height="31" fill="#383838" fill-opacity="0.950"/>
<g stroke="#c8c8c8" fill="none" stroke-width="1.200"><path d="M755 302.500 h9 M755 306.500 h9 M755 310.500 h9 M755 314.500 h9"/><path d="M750.500 301.500 h2 v2 h-2z M750.500 305.500 h2 v2 h-2z M750.500 309.500 h2 v2 h-2z M750.500 313.500 h2 v2 h-2z" stroke-width="0.800"/>
<path d="M789 301.500 l7 3.400 -7 3.400 -7 -3.400z M782 308.400 l7 3.400 7 -3.400 M782 312 l7 3.400 7 -3.400"/>
<path d="M813.500 301.500 h6.500 v6 h-6.500z M822.500 301.500 h6.500 v6 h-6.500z M813.500 310.500 h6.500 v6 h-6.500z M822.500 310.500 h6.500 v6 h-6.500z"/><path d="M815 303 l3.500 3.500 M827.500 303 l-3.500 3.500 M815.500 315 l3 -3 M824.500 312 l3 3 m0 -3 l-3 3" stroke-width="0.800"/></g>
<rect x="808.500" y="568.500" width="29" height="57" fill="#3a3a3a" stroke="#555" stroke-width="1"/>
<path d="M816 583 h13 M822.500 576.500 v13 M820 610 h5" stroke="#ccc" stroke-width="1.800"/>
<rect x="784" y="631" width="51" height="14" fill="#c9c9c9"/>
<text x="788" y="642.500" font-size="12" fill="#3a3a3a" textLength="43" lengthAdjust="spacing">Esri, ICI</text>
</svg>
<div class="panel" style="left:856px;top:145px;width:414px;height:275px"></div>
<div class="t b" style="left:862px;font-size:15.500px;top:152.88px;letter-spacing:0.080px">Tendance nationale</div>
<svg class="abs" style="left:856px;top:145px" width="414" height="275" viewBox="856 145 414 275" font-family="Liberation Sans, sans-serif">
<path d="M928 197 H1240" stroke="#343434" stroke-width="1" stroke-dasharray="4 3"/>
<path d="M928 245.5 H1240" stroke="#343434" stroke-width="1" stroke-dasharray="4 3"/>
<path d="M934.0 197 V294" stroke="#343434" stroke-width="1" stroke-dasharray="4 3"/>
<path d="M993.4 197 V294" stroke="#343434" stroke-width="1" stroke-dasharray="4 3"/>
<path d="M1059.4 197 V294" stroke="#343434" stroke-width="1" stroke-dasharray="4 3"/>
<path d="M1125.4 197 V294" stroke="#343434" stroke-width="1" stroke-dasharray="4 3"/>
<path d="M1191.4 197 V294" stroke="#343434" stroke-width="1" stroke-dasharray="4 3"/>
<path d="M928.500 197 V294.500 H1240" stroke="#8a8a8a" stroke-width="1" fill="none"/>
<path d="M923 197.5 h6" stroke="#8a8a8a"/>
<path d="M923 246.0 h6" stroke="#8a8a8a"/>
<path d="M923 294.5 h6" stroke="#8a8a8a"/>
<path d="M933.3 294.500 v5" stroke="#8a8a8a"/>
<path d="M999.0 294.500 v5" stroke="#8a8a8a"/>
<path d="M1064.6 294.500 v5" stroke="#8a8a8a"/>
<path d="M1130.3 294.500 v5" stroke="#8a8a8a"/>
<path d="M1195.9 294.500 v5" stroke="#8a8a8a"/>
<text x="917" y="202.0" text-anchor="end" font-size="11.500" fill="#fff">100 000</text>
<text x="917" y="250.5" text-anchor="end" font-size="11.500" fill="#fff">50 000</text>
<text x="917" y="299.0" text-anchor="end" font-size="11.500" fill="#fff">0</text>
<text x="932.8" y="318" text-anchor="middle" font-size="11.500" fill="#fff">24/02</text>
<text x="998.5" y="318" text-anchor="middle" font-size="11.500" fill="#fff">02/03</text>
<text x="1064.1" y="318" text-anchor="middle" font-size="11.500" fill="#fff">09/03</text>
<text x="1129.8" y="318" text-anchor="middle" font-size="11.500" fill="#fff">16/03</text>
<text x="1195.4" y="318" text-anchor="middle" font-size="11.500" fill="#fff">23/03</text>
<polyline points="932.8,293.6 942.2,293.5 951.6,293.4 960.9,293.2 970.3,293.0 979.7,292.8 989.1,292.3 998.5,292.0 1007.8,291.6 1017.2,291.2 1026.6,290.6 1036.0,290.0 1045.4,288.9 1054.7,287.6 1064.1,286.1 1073.5,285.5 1082.9,283.5 1092.3,281.3 1101.6,279.3 1111.0,276.6 1120.4,273.8 1129.8,271.4 1139.2,268.5 1148.5,266.0 1157.9,261.6 1167.3,257.1 1176.7,252.4 1186.1,248.6 1195.4,244.9 1204.8,241.4 1214.2,238.0 1223.6,233.6 1233.0,229.4" fill="none" stroke="#ffaa00" stroke-width="1.500"/>
<circle cx="932.8" cy="293.6" r="4.3" fill="#ffaa00"/>
<circle cx="942.2" cy="293.5" r="4.3" fill="#ffaa00"/>
<circle cx="951.6" cy="293.4" r="4.3" fill="#ffaa00"/>
<circle cx="960.9" cy="293.2" r="4.3" fill="#ffaa00"/>
<circle cx="970.3" cy="293.0" r="4.3" fill="#ffaa00"/>
<circle cx="979.7" cy="292.8" r="4.3" fill="#ffaa00"/>
<circle cx="989.1" cy="292.3" r="4.3" fill="#ffaa00"/>
<circle cx="998.5" cy="292.0" r="4.3" fill="#ffaa00"/>
<circle cx="1007.8" cy="291.6" r="4.3" fill="#ffaa00"/>
<circle cx="1017.2" cy="291.2" r="4.3" fill="#ffaa00"/>
<circle cx="1026.6" cy="290.6" r="4.3" fill="#ffaa00"/>
<circle cx="1036.0" cy="290.0" r="4.3" fill="#ffaa00"/>
<circle cx="1045.4" cy="288.9" r="4.3" fill="#ffaa00"/>
<circle cx="1054.7" cy="287.6" r="4.3" fill="#ffaa00"/>
<circle cx="1064.1" cy="286.1" r="4.3" fill="#ffaa00"/>
<circle cx="1073.5" cy="285.5" r="4.3" fill="#ffaa00"/>
<circle cx="1082.9" cy="283.5" r="4.3" fill="#ffaa00"/>
<circle cx="1092.3" cy="281.3" r="4.3" fill="#ffaa00"/>
<circle cx="1101.6" cy="279.3" r="4.3" fill="#ffaa00"/>
<circle cx="1111.0" cy="276.6" r="4.3" fill="#ffaa00"/>
<circle cx="1120.4" cy="273.8" r="4.3" fill="#ffaa00"/>
<circle cx="1129.8" cy="271.4" r="4.3" fill="#ffaa00"/>
<circle cx="1139.2" cy="268.5" r="4.3" fill="#ffaa00"/>
<circle cx="1148.5" cy="266.0" r="4.3" fill="#ffaa00"/>
<circle cx="1157.9" cy="261.6" r="4.3" fill="#ffaa00"/>
<circle cx="1167.3" cy="257.1" r="4.3" fill="#ffaa00"/>
<circle cx="1176.7" cy="252.4" r="4.3" fill="#ffaa00"/>
<circle cx="1186.1" cy="248.6" r="4.3" fill="#ffaa00"/>
<circle cx="1195.4" cy="244.9" r="4.3" fill="#ffaa00"/>
<circle cx="1204.8" cy="241.4" r="4.3" fill="#ffaa00"/>
<circle cx="1214.2" cy="238.0" r="4.3" fill="#ffaa00"/>
<circle cx="1223.6" cy="233.6" r="4.3" fill="#ffaa00"/>
<circle cx="1233.0" cy="229.4" r="4.3" fill="#ffaa00"/>
<polyline points="932.8,293.8 942.2,293.8 951.6,293.8 960.9,293.8 970.3,293.8 979.7,293.8 989.1,293.7 998.5,293.7 1007.8,293.6 1017.2,293.5 1026.6,293.4 1036.0,293.3 1045.4,293.2 1054.7,293.2 1064.1,293.1 1073.5,292.8 1082.9,292.8 1092.3,292.6 1101.6,292.4 1111.0,291.9 1120.4,291.5 1129.8,291.1 1139.2,290.9 1148.5,289.9 1157.9,289.5 1167.3,288.8 1176.7,287.9 1186.1,287.0 1195.4,286.6 1204.8,285.7 1214.2,284.7 1223.6,283.7 1233.0,283.2" fill="none" stroke="#4ce600" stroke-width="1.500"/>
<circle cx="932.8" cy="293.8" r="4.3" fill="#4ce600"/>
<circle cx="942.2" cy="293.8" r="4.3" fill="#4ce600"/>
<circle cx="951.6" cy="293.8" r="4.3" fill="#4ce600"/>
<circle cx="960.9" cy="293.8" r="4.3" fill="#4ce600"/>
<circle cx="970.3" cy="293.8" r="4.3" fill="#4ce600"/>
<circle cx="979.7" cy="293.8" r="4.3" fill="#4ce600"/>
<circle cx="989.1" cy="293.7" r="4.3" fill="#4ce600"/>
<circle cx="998.5" cy="293.7" r="4.3" fill="#4ce600"/>
<circle cx="1007.8" cy="293.6" r="4.3" fill="#4ce600"/>
<circle cx="1017.2" cy="293.5" r="4.3" fill="#4ce600"/>
<circle cx="1026.6" cy="293.4" r="4.3" fill="#4ce600"/>
<circle cx="1036.0" cy="293.3" r="4.3" fill="#4ce600"/>
<circle cx="1045.4" cy="293.2" r="4.3" fill="#4ce600"/>
<circle cx="1054.7" cy="293.2" r="4.3" fill="#4ce600"/>
<circle cx="1064.1" cy="293.1" r="4.3" fill="#4ce600"/>
<circle cx="1073.5" cy="292.8" r="4.3" fill="#4ce600"/>
<circle cx="1082.9" cy="292.8" r="4.3" fill="#4ce600"/>
<circle cx="1092.3" cy="292.6" r="4.3" fill="#4ce600"/>
<circle cx="1101.6" cy="292.4" r="4.3" fill="#4ce600"/>
<circle cx="1111.0" cy="291.9" r="4.3" fill="#4ce600"/>
<circle cx="1120.4" cy="291.5" r="4.3" fill="#4ce600"/>
<circle cx="1129.8" cy="291.1" r="4.3" fill="#4ce600"/>
<circle cx="1139.2" cy="290.9" r="4.3" fill="#4ce600"/>
<circle cx="1148.5" cy="289.9" r="4.3" fill="#4ce600"/>
<circle cx="1157.9" cy="289.5" r="4.3" fill="#4ce600"/>
<circle cx="1167.3" cy="288.8" r="4.3" fill="#4ce600"/>
<circle cx="1176.7" cy="287.9" r="4.3" fill="#4ce600"/>
<circle cx="1186.1" cy="287.0" r="4.3" fill="#4ce600"/>
<circle cx="1195.4" cy="286.6" r="4.3" fill="#4ce600"/>
<circle cx="1204.8" cy="285.7" r="4.3" fill="#4ce600"/>
<circle cx="1214.2" cy="284.7" r="4.3" fill="#4ce600"/>
<circle cx="1223.6" cy="283.7" r="4.3" fill="#4ce600"/>
<circle cx="1233.0" cy="283.2" r="4.3" fill="#4ce600"/>
<polyline points="932.8,293.8 942.2,293.8 951.6,293.8 960.9,293.8 970.3,293.8 979.7,293.8 989.1,293.8 998.5,293.7 1007.8,293.7 1017.2,293.7 1026.6,293.7 1036.0,293.6 1045.4,293.6 1054.7,293.4 1064.1,293.4 1073.5,293.2 1082.9,293.0 1092.3,292.8 1101.6,292.6 1111.0,292.4 1120.4,292.0 1129.8,291.7 1139.2,291.4 1148.5,290.9 1157.9,290.5 1167.3,289.9 1176.7,289.1 1186.1,288.5 1195.4,287.9 1204.8,287.2 1214.2,286.5 1223.6,285.9 1233.0,284.9" fill="none" stroke="#e1e1e1" stroke-width="1.500"/>
<circle cx="932.8" cy="293.8" r="4.3" fill="#e1e1e1"/>
<circle cx="942.2" cy="293.8" r="4.3" fill="#e1e1e1"/>
<circle cx="951.6" cy="293.8" r="4.3" fill="#e1e1e1"/>
<circle cx="960.9" cy="293.8" r="4.3" fill="#e1e1e1"/>
<circle cx="970.3" cy="293.8" r="4.3" fill="#e1e1e1"/>
<circle cx="979.7" cy="293.8" r="4.3" fill="#e1e1e1"/>
<circle cx="989.1" cy="293.8" r="4.3" fill="#e1e1e1"/>
<circle cx="998.5" cy="293.7" r="4.3" fill="#e1e1e1"/>
<circle cx="1007.8" cy="293.7" r="4.3" fill="#e1e1e1"/>
<circle cx="1017.2" cy="293.7" r="4.3" fill="#e1e1e1"/>
<circle cx="1026.6" cy="293.7" r="4.3" fill="#e1e1e1"/>
<circle cx="1036.0" cy="293.6" r="4.3" fill="#e1e1e1"/>
<circle cx="1045.4" cy="293.6" r="4.3" fill="#e1e1e1"/>
<circle cx="1054.7" cy="293.4" r="4.3" fill="#e1e1e1"/>
<circle cx="1064.1" cy="293.4" r="4.3" fill="#e1e1e1"/>
<circle cx="1073.5" cy="293.2" r="4.3" fill="#e1e1e1"/>
<circle cx="1082.9" cy="293.0" r="4.3" fill="#e1e1e1"/>
<circle cx="1092.3" cy="292.8" r="4.3" fill="#e1e1e1"/>
<circle cx="1101.6" cy="292.6" r="4.3" fill="#e1e1e1"/>
<circle cx="1111.0" cy="292.4" r="4.3" fill="#e1e1e1"/>
<circle cx="1120.4" cy="292.0" r="4.3" fill="#e1e1e1"/>
<circle cx="1129.8" cy="291.7" r="4.3" fill="#e1e1e1"/>
<circle cx="1139.2" cy="291.4" r="4.3" fill="#e1e1e1"/>
<circle cx="1148.5" cy="290.9" r="4.3" fill="#e1e1e1"/>
<circle cx="1157.9" cy="290.5" r="4.3" fill="#e1e1e1"/>
<circle cx="1167.3" cy="289.9" r="4.3" fill="#e1e1e1"/>
<circle cx="1176.7" cy="289.1" r="4.3" fill="#e1e1e1"/>
<circle cx="1186.1" cy="288.5" r="4.3" fill="#e1e1e1"/>
<circle cx="1195.4" cy="287.9" r="4.3" fill="#e1e1e1"/>
<circle cx="1204.8" cy="287.2" r="4.3" fill="#e1e1e1"/>
<circle cx="1214.2" cy="286.5" r="4.3" fill="#e1e1e1"/>
<circle cx="1223.6" cy="285.9" r="4.3" fill="#e1e1e1"/>
<circle cx="1233.0" cy="284.9" r="4.3" fill="#e1e1e1"/>
<circle cx="966.800" cy="362" r="7.800" fill="#ffaa00"/><circle cx="1101" cy="362" r="7.800" fill="#4ce600"/><circle cx="966.800" cy="390.500" r="7.800" fill="#e1e1e1"/>
</svg>
<div class="t" style="left:979px;font-size:11.500px;top:358.27px;letter-spacing:-0.036px">Attualmente positivi</div>
<div class="t" style="left:1113px;font-size:11.500px;top:358.27px;letter-spacing:-0.127px">Dimessi</div>
<div class="t" style="left:979px;font-size:11.500px;top:386.27px;letter-spacing:-0.049px">Deceduti</div>
<div class="panel" style="left:856px;top:430px;width:414px;height:213px"></div>
<div class="t b" style="left:862px;font-size:15.500px;top:437.88px;letter-spacing:-0.054px">Augmentation quotidienne de actuellement positive</div>
<svg class="abs" style="left:856px;top:431px" width="414" height="211" viewBox="856 431 414 211" font-family="Liberation Sans, sans-serif">
<path d="M922 483 H1240" stroke="#343434" stroke-width="1" stroke-dasharray="4 3"/>
<path d="M922 524.5 H1240" stroke="#343434" stroke-width="1" stroke-dasharray="4 3"/>
<path d="M922 565.5 H1240" stroke="#343434" stroke-width="1" stroke-dasharray="4 3"/>
<path d="M988.7 483 V606" stroke="#343434" stroke-width="1" stroke-dasharray="4 3"/>
<path d="M1055.9 483 V606" stroke="#343434" stroke-width="1" stroke-dasharray="4 3"/>
<path d="M1123.1 483 V606" stroke="#343434" stroke-width="1" stroke-dasharray="4 3"/>
<path d="M1190.3 483 V606" stroke="#343434" stroke-width="1" stroke-dasharray="4 3"/>
<path d="M922.500 483 V606.500 H1240" stroke="#8a8a8a" stroke-width="1" fill="none"/>
<path d="M917 483.5 h6" stroke="#8a8a8a"/>
<path d="M917 525.0 h6" stroke="#8a8a8a"/>
<path d="M917 566.0 h6" stroke="#8a8a8a"/>
<path d="M917 606.5 h6" stroke="#8a8a8a"/>
<path d="M927.5 606.500 v5" stroke="#8a8a8a"/>
<path d="M994.7 606.500 v5" stroke="#8a8a8a"/>
<path d="M1061.9 606.500 v5" stroke="#8a8a8a"/>
<path d="M1129.1 606.500 v5" stroke="#8a8a8a"/>
<path d="M1196.3 606.500 v5" stroke="#8a8a8a"/>
<text x="910.500" y="488.0" text-anchor="end" font-size="11.500" fill="#fff">6 000</text>
<text x="910.500" y="529.5" text-anchor="end" font-size="11.500" fill="#fff">4 000</text>
<text x="910.500" y="570.5" text-anchor="end" font-size="11.500" fill="#fff">2 000</text>
<text x="910.500" y="611.4" text-anchor="end" font-size="11.500" fill="#fff">0</text>
<text x="927.0" y="629.800" text-anchor="middle" font-size="11.500" fill="#fff">24/02</text>
<text x="994.2" y="629.800" text-anchor="middle" font-size="11.500" fill="#fff">02/03</text>
<text x="1061.4" y="629.800" text-anchor="middle" font-size="11.500" fill="#fff">09/03</text>
<text x="1128.6" y="629.800" text-anchor="middle" font-size="11.500" fill="#fff">16/03</text>
<text x="1195.8" y="629.800" text-anchor="middle" font-size="11.500" fill="#fff">23/03</text>
<polyline points="927.0,601.4 936.6,604.1 946.2,604.1 955.8,602.1 965.4,601.1 975.0,601.4 984.6,600.4 994.2,595.7 1003.8,597.0 1013.4,596.7 1023.0,594.0 1032.6,593.3 1042.2,583.6 1051.8,579.2 1061.4,573.5 1071.0,595.3 1080.6,563.4 1090.2,560.1 1099.8,563.4 1109.4,549.0 1119.0,548.3 1128.6,555.4 1138.2,545.3 1147.8,552.3 1157.4,514.1 1167.0,510.0 1176.6,507.0 1186.2,525.1 1195.8,528.8 1205.4,532.2 1215.0,534.5 1224.6,514.1 1234.2,516.1" fill="none" stroke="#ffaa00" stroke-width="2" stroke-linejoin="round"/>
<circle cx="927.0" cy="601.4" r="4.600" fill="#ffaa00"/>
<circle cx="936.6" cy="604.1" r="4.600" fill="#ffaa00"/>
<circle cx="946.2" cy="604.1" r="4.600" fill="#ffaa00"/>
<circle cx="955.8" cy="602.1" r="4.600" fill="#ffaa00"/>
<circle cx="965.4" cy="601.1" r="4.600" fill="#ffaa00"/>
<circle cx="975.0" cy="601.4" r="4.600" fill="#ffaa00"/>
<circle cx="984.6" cy="600.4" r="4.600" fill="#ffaa00"/>
<circle cx="994.2" cy="595.7" r="4.600" fill="#ffaa00"/>
<circle cx="1003.8" cy="597.0" r="4.600" fill="#ffaa00"/>
<circle cx="1013.4" cy="596.7" r="4.600" fill="#ffaa00"/>
<circle cx="1023.0" cy="594.0" r="4.600" fill="#ffaa00"/>
<circle cx="1032.6" cy="593.3" r="4.600" fill="#ffaa00"/>
<circle cx="1042.2" cy="583.6" r="4.600" fill="#ffaa00"/>
<circle cx="1051.8" cy="579.2" r="4.600" fill="#ffaa00"/>
<circle cx="1061.4" cy="573.5" r="4.600" fill="#ffaa00"/>
<circle cx="1071.0" cy="595.3" r="4.600" fill="#ffaa00"/>
<circle cx="1080.6" cy="563.4" r="4.600" fill="#ffaa00"/>
<circle cx="1090.2" cy="560.1" r="4.600" fill="#ffaa00"/>
<circle cx="1099.8" cy="563.4" r="4.600" fill="#ffaa00"/>
<circle cx="1109.4" cy="549.0" r="4.600" fill="#ffaa00"/>
<circle cx="1119.0" cy="548.3" r="4.600" fill="#ffaa00"/>
<circle cx="1128.6" cy="555.4" r="4.600" fill="#ffaa00"/>
<circle cx="1138.2" cy="545.3" r="4.600" fill="#ffaa00"/>
<circle cx="1147.8" cy="552.3" r="4.600" fill="#ffaa00"/>
<circle cx="1157.4" cy="514.1" r="4.600" fill="#ffaa00"/>
<circle cx="1167.0" cy="510.0" r="4.600" fill="#ffaa00"/>
<circle cx="1176.6" cy="507.0" r="4.600" fill="#ffaa00"/>
<circle cx="1186.2" cy="525.1" r="4.600" fill="#ffaa00"/>
<circle cx="1195.8" cy="528.8" r="4.600" fill="#ffaa00"/>
<circle cx="1205.4" cy="532.2" r="4.600" fill="#ffaa00"/>
<circle cx="1215.0" cy="534.5" r="4.600" fill="#ffaa00"/>
<circle cx="1224.6" cy="514.1" r="4.600" fill="#ffaa00"/>
<circle cx="1234.2" cy="516.1" r="4.600" fill="#ffaa00"/>
</svg>
<div class="panel" style="left:856px;top:653px;width:414px;height:137px;overflow:hidden">
  <div class="abs" style="left:405px;top:0;width:8px;height:136px;background:#3c3c3c"></div>
  <div class="sb" style="left:405px;top:0;width:8px;height:124px"></div>
</div>
<div class="t b" style="left:862px;font-size:15.500px;top:659.88px;letter-spacing:-0.966px">Téléchargement des données:</div>
<div class="abs" style="left:880.500px;top:700.5px;width:4.4px;height:4.4px;border-radius:50%;background:#fff"></div>
<div class="abs" style="left:880.500px;top:719.0px;width:4.4px;height:4.4px;border-radius:50%;background:#fff"></div>
<div class="abs" style="left:880.500px;top:737.5px;width:4.4px;height:4.4px;border-radius:50%;background:#fff"></div>
<div class="abs" style="left:880.500px;top:755.5px;width:4.4px;height:4.4px;border-radius:50%;background:#fff"></div>
<div class="t" style="left:897px;font-size:13px;top:696.00px;letter-spacing:-0.396px"><b>PDF:</b> <a>Feuilles récapitulatives</a></div>
<div class="t" style="left:897px;font-size:13px;top:714.50px;letter-spacing:-0.476px"><b>CSV:</b> <a>Régions</a> - <a>Provinces</a> - <a>Tendance nationale</a></div>
<div class="t" style="left:897px;font-size:13px;top:733.00px;letter-spacing:-0.385px"><b>Forme</b> : <a>zones de confinement</a></div>
<div class="t" style="left:897px;font-size:13px;top:751.00px;letter-spacing:-0.509px"><b>Métadonnées:</b> <a>données</a> (RNDT) - <a>données</a> (DCAT-AP-IT) - <a>zones</a></div>
<div class="t" style="left:897px;font-size:13px;top:766.50px;letter-spacing:-0.794px">(RNDT)</div>
</body>
</html>
